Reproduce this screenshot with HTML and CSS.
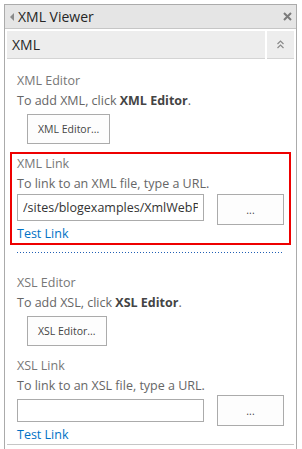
FILE: index.html
```html
<!DOCTYPE html>
<html lang="en">
<head>
    <meta charset="UTF-8">
    <title>XML Viewer</title>
    <link rel="stylesheet" href="styles.css">
</head>
<body>
    <div class="panel">
        <div class="titlebar">
            <span class="arrow"></span>
            <span class="title">XML Viewer</span>
            <svg class="close" width="9" height="9" viewBox="0 0 9 9">
                <path d="M1 1 L8 8 M8 1 L1 8" stroke="#7a7a7a" stroke-width="2"/>
            </svg>
        </div>
        <div class="section-head">
            <div class="section-name">XML</div>
            <div class="section-toggle">
                <svg width="9" height="9" viewBox="0 0 9 9">
                    <path d="M1.5 4 L4.5 1 L7.5 4 M1.5 8 L4.5 5 L7.5 8" fill="none" stroke="#8a8a8a" stroke-width="1.2"/>
                </svg>
            </div>
        </div>

        <div class="content">
            <div class="group">
                <div class="label">XML Editor</div>
                <div class="hint">To add XML, click <b>XML Editor</b>.</div>
                <button class="btn editor-btn">XML Editor...</button>
            </div>

            <div class="group highlight">
                <div class="label">XML Link</div>
                <div class="hint">To link to an XML file, type a URL.</div>
                <div class="row">
                    <input type="text" class="url" value="/sites/blogexamples/XmlWebPartFiles/data.xml">
                    <button class="btn browse">...</button>
                </div>
                <a href="#" class="test">Test Link</a>
            </div>

            <div class="divider"></div>

            <div class="group xsl">
                <div class="label">XSL Editor</div>
                <div class="hint">To add XSL, click <b>XSL Editor</b>.</div>
                <button class="btn editor-btn">XSL Editor...</button>
            </div>

            <div class="group">
                <div class="label">XSL Link</div>
                <div class="hint">To link to an XSL file, type a URL.</div>
                <div class="row row-center">
                    <input type="text" class="url url-empty" value="">
                    <button class="btn browse">...</button>
                </div>
                <a href="#" class="test">Test Link</a>
            </div>
        </div>
        <div class="bottom-line"></div>
    </div>
</body>
</html>
```

FILE: styles.css
```css
body {
    margin: 0;
    padding: 0;
    background: #fff;
    font-family: "Open Sans", "Noto Sans", sans-serif;
    color: #444;
    overflow: hidden;
}

.panel {
    margin: 4px 0 0 4px;
    width: 291px;
    height: 460px;
    border: 1px solid #ababab;
    border-bottom: none;
}

.titlebar {
    height: 23px;
    background: #e5e5e5;
    border-bottom: 1px solid #c6c6c6;
    display: flex;
    align-items: center;
    padding: 0 4px 0 5px;
}

.arrow {
    width: 0;
    height: 0;
    border-top: 4px solid transparent;
    border-bottom: 4px solid transparent;
    border-right: 4px solid #8a8a8a;
    margin-right: 4px;
}

.title {
    font-size: 14px;
    color: #262626;
    flex: 1;
}

.section-head {
    display: flex;
    gap: 2px;
    margin: 2px 2px 0 2px;
    height: 28px;
}

.section-name {
    flex: 1;
    background: #ededed;
    border-bottom: 1px solid #d4d4d4;
    font-size: 14px;
    color: #262626;
    padding-left: 5px;
    display: flex;
    align-items: center;
}

.section-toggle {
    width: 27px;
    background: #ededed;
    border-bottom: 1px solid #d4d4d4;
    display: flex;
    align-items: center;
    justify-content: center;
}

.content {
    padding: 12px 0 0 5px;
}

.group {
    padding: 0 7px;
    font-size: 12.5px;
    line-height: 20px;
}

.label {
    color: #777;
}

.hint {
    color: #666;
}

.hint b {
    color: #444;
}

.btn {
    font-family: inherit;
    font-size: 10.5px;
    background: #fdfdfd;
    border: 1px solid #ababab;
    color: #444;
    cursor: pointer;
}

.editor-btn {
    display: block;
    margin: 3px 0 0 10px;
    height: 30px;
    padding: 0 10px;
}

.highlight {
    border: 2px solid #ee0000;
    padding: 0 5px;
    margin-top: 8px;
    width: 267px;
}

.row {
    display: flex;
    align-items: flex-start;
}

.row-center {
    align-items: center;
    margin-top: -1px;
}

.url {
    width: 187px;
    height: 27px;
    box-sizing: border-box;
    border: 1px solid #ababab;
    font-family: inherit;
    font-size: 12.5px;
    color: #333;
    padding: 0 5px;
    margin: 0;
}

.url-empty {
    height: 23px;
}

.browse {
    width: 67px;
    height: 31px;
    margin-left: 13px;
}

.test {
    display: block;
    line-height: 18px;
    color: #0072c6;
    text-decoration: none;
}

.divider {
    margin: 7px 0 0 7px;
    width: 265px;
    height: 1px;
    background-image: linear-gradient(to right, #1f5fb5 1px, transparent 1px);
    background-size: 3px 1px;
}

.xsl {
    margin-top: 20px;
}

.xsl + .group {
    margin-top: 10px;
}

.bottom-line {
    margin: 0 2px;
    border-top: 1px solid #c6c6c6;
}
```
